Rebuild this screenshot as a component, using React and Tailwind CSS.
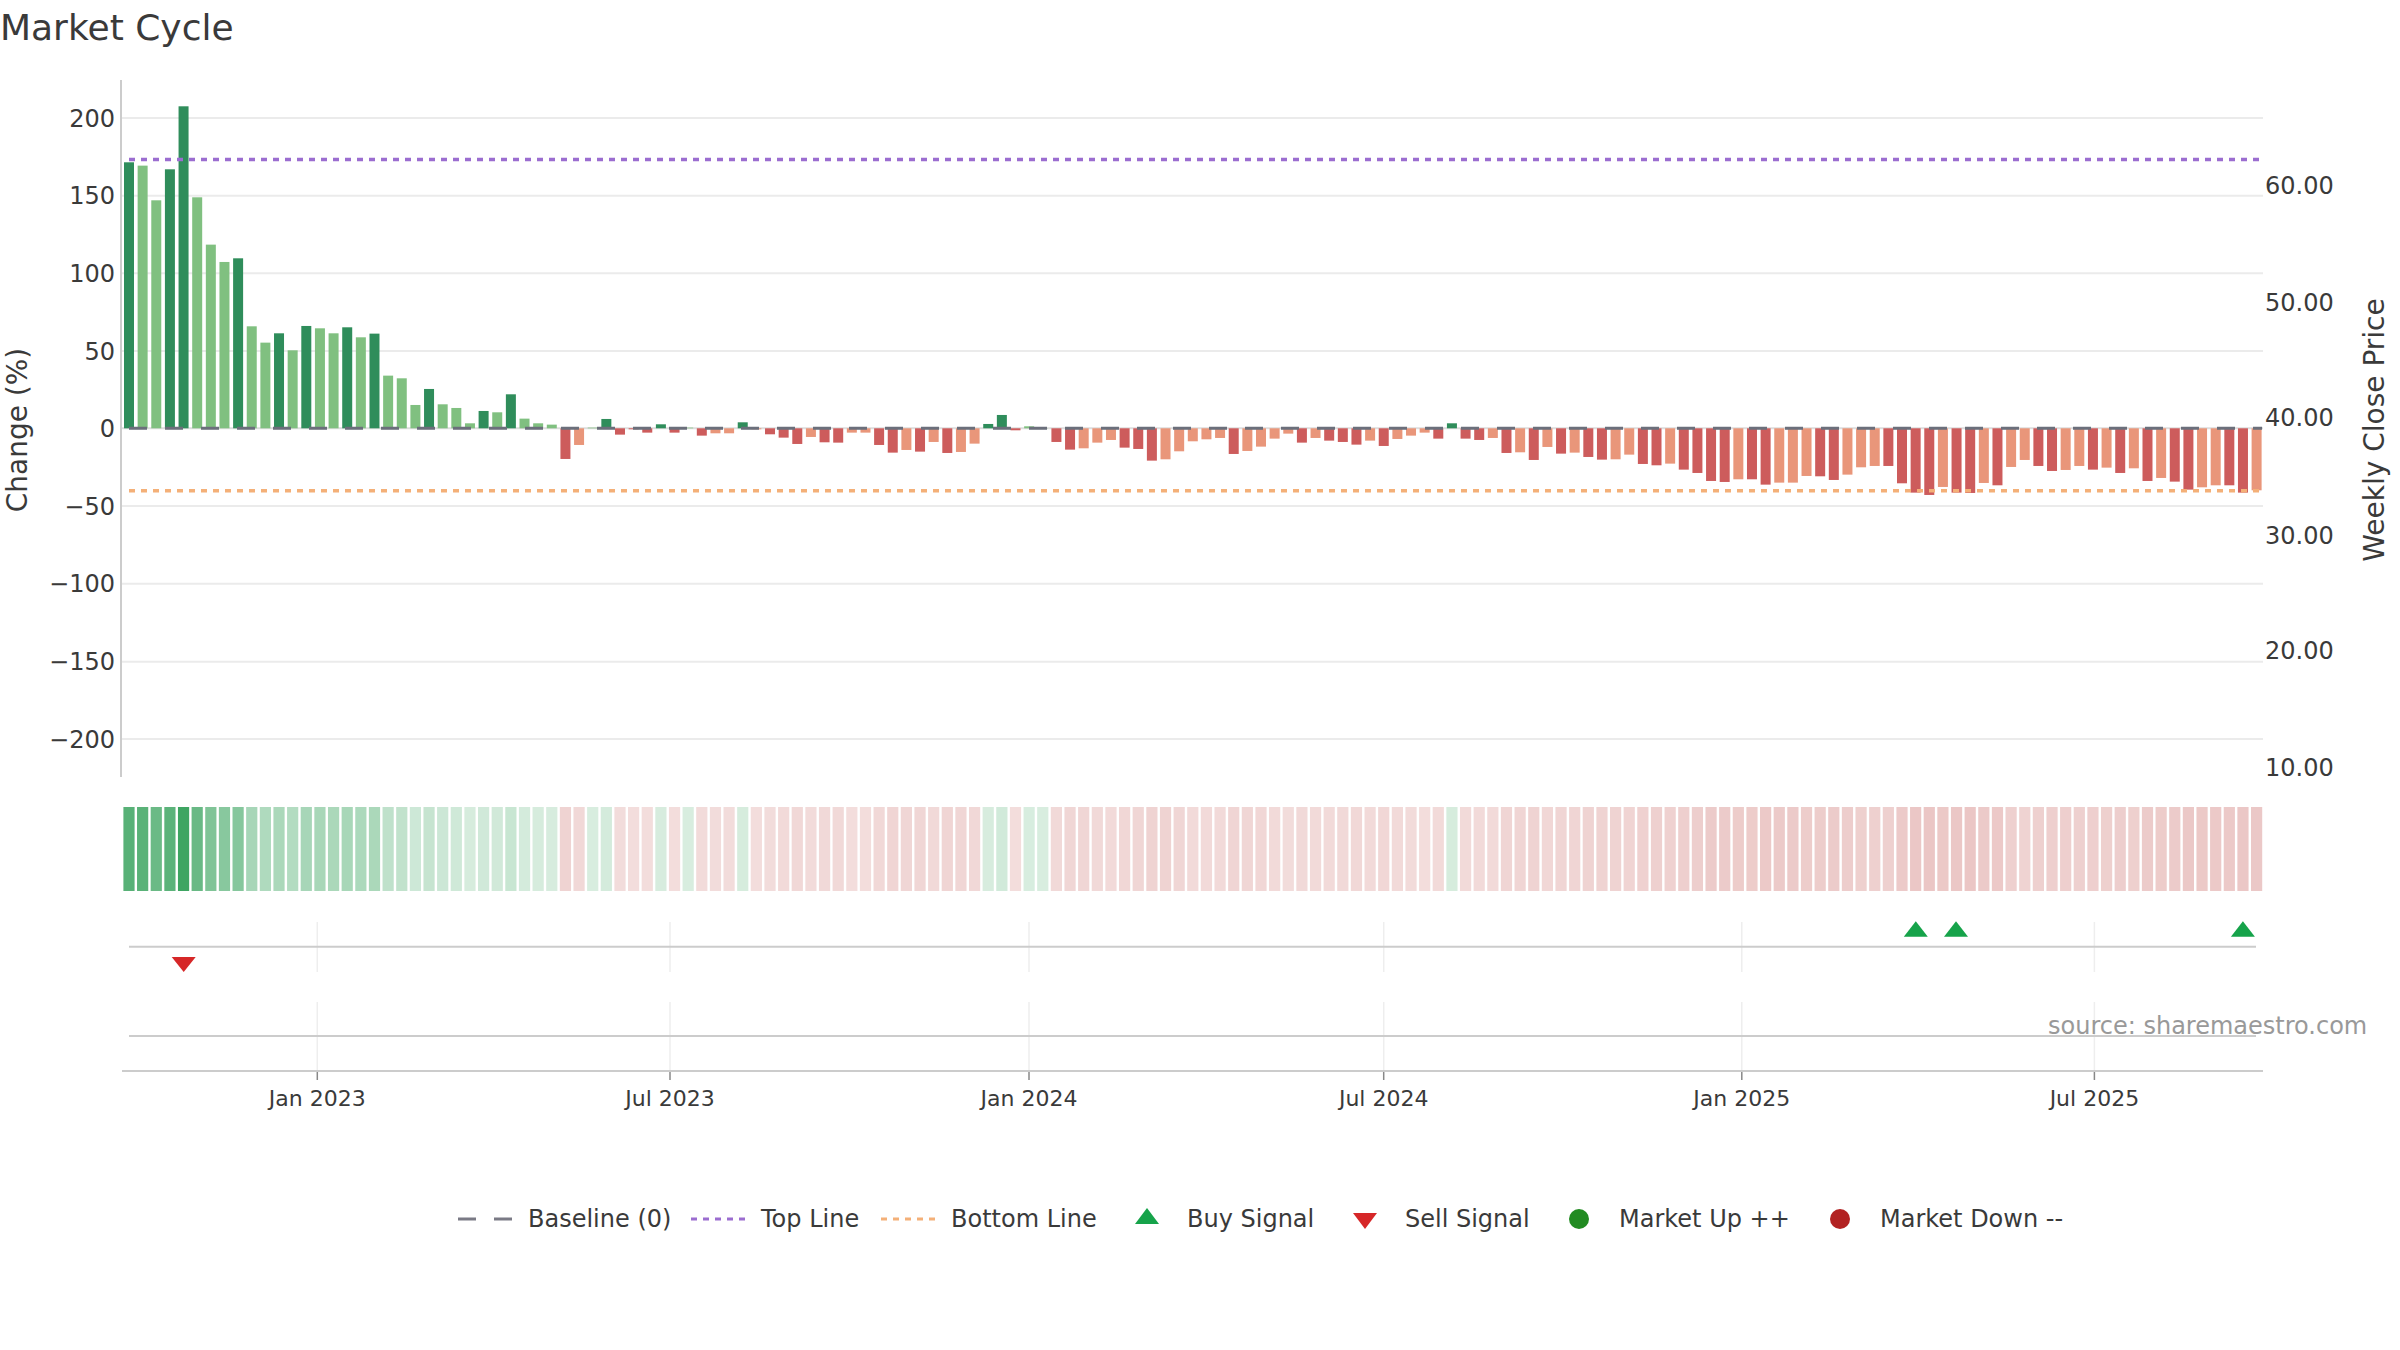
// bar heights are in thirds of a pixel, minus = below the baseline
const heights = [
  798, 788, 684, 777, 966, 693, 551, 499, 510, 306, 257, 285, 234, 307, 300, 285,
  303, 273, 284, 158, 150, 70, 118, 72, 61, 15, 52, 48, 102, 29, 15, 11,
  -92, -50, 2, 28, -19, -3, -13, 12, -13, 2, -22, -15, -15, 18, -3, -18, -28, -47,
  -26, -42, -43, -13, -13, -50, -73, -65, -70, -41, -74, -71, -46, 13, 40, -6, 6, 1,
  -41, -64, -60, -43, -35, -58, -62, -97, -93, -69, -39, -33, -29, -77, -68, -55, -31, -16,
  -43, -29, -37, -41, -49, -37, -53, -32, -22, -13, -31, 15, -31, -35, -29, -74, -72, -95,
  -56, -76, -73, -86, -94, -93, -79, -107, -111, -106, -124, -134, -158, -161, -153, -153, -169, -163,
  -163, -143, -144, -155, -139, -117, -113, -113, -165, -193, -200, -176, -193, -194, -164, -171, -116,
  -95, -113, -128, -125, -113, -124, -118, -134, -120, -158, -149, -160, -184, -177, -171, -171, -193, -186,
];

// d = strong bar, l = weak bar, ten weeks per chunk
const strength = [
  'dllddllldl', 'ldldlldldl', 'lldllldldl', 'lldllddddd', 'dldlldlddd',
  'lddllddldl', 'dllddd' + 'lldd', 'llldddllll', 'ldlllldldd', 'dldllldddd',
  'ldldldlddl', 'lddlddddld', 'dllldd' + 'llld', 'dddlddldll', 'ddlldldldl', 'ddllddl',
].join('');

const ZERO = 428.3;
const firstX = 129;
const step = (2256.6 - 129) / 156;

const yTicks = [
  [118, '200'], [195.7, '150'], [273.3, '100'], [351, '50'], [428.3, '0'],
  [506, '−50'], [583.7, '−100'], [661.7, '−150'], [739, '−200'],
];
const priceTicks = [[185, '60.00'], [302, '50.00'], [417, '40.00'], [535, '30.00'], [650, '20.00'], [767, '10.00']];
const dates = [
  [317.3, 'Jan 2023'], [670, 'Jul 2023'], [1029, 'Jan 2024'],
  [1383.7, 'Jul 2024'], [1741.8, 'Jan 2025'], [2094.4, 'Jul 2025'],
];

function barColor(h, i) {
  const dark = strength[i] === 'd';
  if (h >= 0) return dark ? '#2f8d5b' : '#80c080';
  return dark ? '#cd5c5c' : '#e9967a';
}

function heatColor(h) {
  const pct = Math.abs(h) / 4.668;
  if (h >= 0) return `rgba(40,155,80,${0.18 + 0.72 * (pct / 207)})`;
  return `rgba(185,60,55,${0.17 + 0.12 * Math.min(pct / 42, 1)})`;
}

function Chart() {
  return (
    <svg width="2400" height="1120" viewBox="0 60 2400 1120" className="block">
      {yTicks.map(([y, label]) => (
        <g key={label}>
          <line x1="122" x2="2263" y1={y} y2={y} stroke={label === '0' ? '#dddddd' : '#ebebeb'} strokeWidth="2" />
          <text x="115" y={y + 8.5} textAnchor="end" className="fill-[#3a3a3a] text-[24px]">{label}</text>
        </g>
      ))}
      <line x1="121" x2="121" y1="80" y2="777" stroke="#cccccc" strokeWidth="2" />

      {priceTicks.map(([y, label]) => (
        <text key={label} x="2265" y={y + 8.5} className="fill-[#3a3a3a] text-[24px]">{label}</text>
      ))}

      <text transform="translate(26.5 430) rotate(-90)" textAnchor="middle" className="fill-[#3a3a3a] text-[28px]">Change (%)</text>
      <text transform="translate(2384 430) rotate(-90)" textAnchor="middle" className="fill-[#3a3a3a] text-[28px]">Weekly Close Price</text>

      {heights.map((h, i) => {
        const px = Math.abs(h) / 3;
        return (
          <rect
            key={i}
            x={firstX + i * step - 5}
            y={h >= 0 ? ZERO - px : ZERO}
            width="10"
            height={px}
            fill={barColor(h, i)}
          />
        );
      })}

      <line x1="129" x2="2262" y1={ZERO} y2={ZERO} stroke="#6b6f7b" strokeWidth="3" strokeDasharray="18 18" />
      <line x1="129" x2="2262" y1="159.5" y2="159.5" stroke="#9b6dd0" strokeWidth="3.5" strokeDasharray="6 6" />
      <line x1="129" x2="2262" y1="490.7" y2="490.7" stroke="#f4b078" strokeWidth="3.5" strokeDasharray="6 6" />

      {heights.map((h, i) => (
        <rect key={i} x={firstX + i * step - 5.6} y="807" width="11.2" height="84" fill={heatColor(h)} />
      ))}

      {/* signal rows */}
      {dates.map(([x, label]) => (
        <g key={label}>
          <line x1={x} x2={x} y1="922" y2="972" stroke="#eeeeee" strokeWidth="1.5" />
          <line x1={x} x2={x} y1="1002" y2="1071" stroke="#eeeeee" strokeWidth="1.5" />
          <line x1={x} x2={x} y1="1071" y2="1080" stroke="#888888" strokeWidth="1.5" />
          <text x={x} y="1106" textAnchor="middle" className="fill-[#3a3a3a] text-[22px]">{label}</text>
        </g>
      ))}
      <line x1="129" x2="2256" y1="946.7" y2="946.7" stroke="#cccccc" strokeWidth="2" />
      <line x1="129" x2="2256" y1="1036" y2="1036" stroke="#cccccc" strokeWidth="2" />
      <line x1="122" x2="2263" y1="1071" y2="1071" stroke="#cccccc" strokeWidth="2" />

      <polygon points="171.7,957 195.7,957 183.7,972" fill="#d62728" />
      {[1915.8, 1956, 2242.9].map(x => (
        <polygon key={x} points={`${x - 12},936.7 ${x + 12},936.7 ${x},921.3`} fill="#16a34a" />
      ))}

      <text x="2048" y="1033.5" className="fill-[#999999] text-[24px]">source: sharemaestro.com</text>
    </svg>
  );
}

function LineKey({ color, dash }) {
  return (
    <svg width="55" height="6" className="block">
      <line x1="0" x2="55" y1="3" y2="3" stroke={color} strokeWidth="3" strokeDasharray={dash} />
    </svg>
  );
}

function Triangle({ down, color }) {
  return (
    <svg width="24" height="16" className="block">
      <polygon points={down ? '0,0 24,0 12,16' : '0,16 24,16 12,0'} fill={color} />
    </svg>
  );
}

function Dot({ color }) {
  return <span className="block w-5 h-5 rounded-full" style={{ background: color }} />;
}

const legend = [
  { label: 'Baseline (0)', width: 'w-[233px] gap-[15px]', icon: <LineKey color="#7a7a85" dash="18 18" /> },
  { label: 'Top Line', width: 'w-[190px] gap-[15px]', icon: <LineKey color="#9b6dd0" dash="6 6" /> },
  { label: 'Bottom Line', width: 'w-[238px] gap-[15px]', icon: <LineKey color="#f4b078" dash="6 6" /> },
  { label: 'Buy Signal', width: 'w-[218px] gap-[13px]', icon: <div className="-translate-y-[3px]"><Triangle color="#16a34a" /></div> },
  { label: 'Sell Signal', width: 'w-[214px] gap-[13px]', icon: <div className="translate-y-[2px]"><Triangle down color="#d62728" /></div> },
  { label: 'Market Up ++', width: 'w-[261px] gap-[13px]', icon: <Dot color="#228b22" /> },
  { label: 'Market Down --', width: 'gap-[13px]', icon: <Dot color="#b22222" /> },
];

export default function App() {
  return (
    <div className="w-[2400px] h-[1350px] bg-white overflow-hidden font-['DejaVu_Sans',sans-serif] text-[#3a3a3a]">
      <h1 className="h-[60px] text-[36px] leading-[56px] font-normal">Market Cycle</h1>
      <Chart />
      <div className="h-[78px] pl-[458px] flex items-center text-[24px]">
        {legend.map(item => (
          <div key={item.label} className={`flex items-center shrink-0 ${item.width}`}>
            <div className="w-[55px] flex justify-center">{item.icon}</div>
            <span>{item.label}</span>
          </div>
        ))}
      </div>
    </div>
  );
}
